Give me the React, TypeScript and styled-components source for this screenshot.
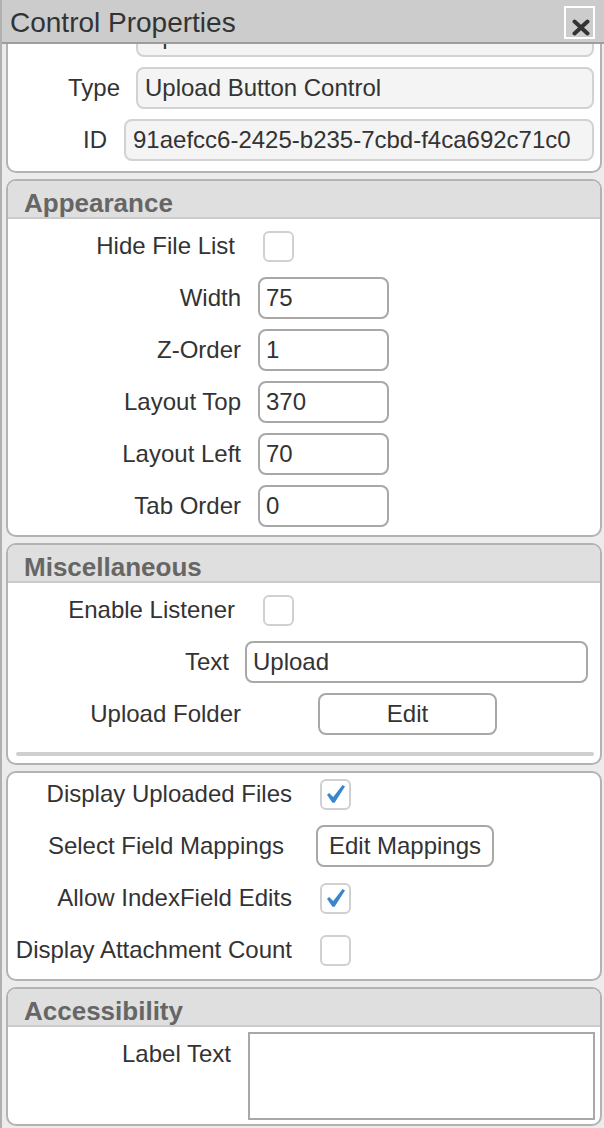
import { useLayoutEffect, useRef } from "react";
import styled, { createGlobalStyle } from "styled-components";

const GlobalStyle = createGlobalStyle`
  html, body {
    margin: 0;
    padding: 0;
  }
  body {
    font-family: "Liberation Sans", Arial, Helvetica, sans-serif;
    color: #333;
    background: #ececec;
    overflow: hidden;
  }
  * {
    box-sizing: border-box;
  }
`;

type RowSpec = {
  label: string;
  labelWidth: number;
  gap: number;
  kind: "text" | "readonly" | "check" | "button" | "area";
  value?: string;
  width?: number;
  right?: number;
  checked?: boolean;
};

const general: RowSpec[] = [
  { label: "Name", labelWidth: 112, gap: 16, kind: "readonly", value: "Upload1", right: 6 },
  { label: "Type", labelWidth: 112, gap: 16, kind: "readonly", value: "Upload Button Control", right: 6 },
  { label: "ID", labelWidth: 99, gap: 17, kind: "readonly", value: "91aefcc6-2425-b235-7cbd-f4ca692c71c0", right: 6 },
];

const appearance: RowSpec[] = [
  { label: "Hide File List", labelWidth: 227, gap: 28, kind: "check" },
  { label: "Width", labelWidth: 233, gap: 17, kind: "text", value: "75", width: 131 },
  { label: "Z-Order", labelWidth: 233, gap: 17, kind: "text", value: "1", width: 131 },
  { label: "Layout Top", labelWidth: 233, gap: 17, kind: "text", value: "370", width: 131 },
  { label: "Layout Left", labelWidth: 233, gap: 17, kind: "text", value: "70", width: 131 },
  { label: "Tab Order", labelWidth: 233, gap: 17, kind: "text", value: "0", width: 131 },
];

const misc: RowSpec[] = [
  { label: "Enable Listener", labelWidth: 227, gap: 28, kind: "check" },
  { label: "Text", labelWidth: 221, gap: 16, kind: "text", value: "Upload", right: 12 },
  { label: "Upload Folder", labelWidth: 233, gap: 77, kind: "button", value: "Edit", width: 179 },
];

const uploads: RowSpec[] = [
  { label: "Display Uploaded Files", labelWidth: 284, gap: 28, kind: "check", checked: true },
  { label: "Select Field Mappings", labelWidth: 276, gap: 32, kind: "button", value: "Edit Mappings", width: 178 },
  { label: "Allow IndexField Edits", labelWidth: 284, gap: 28, kind: "check", checked: true },
  { label: "Display Attachment Count", labelWidth: 284, gap: 28, kind: "check" },
];

const accessibility: RowSpec[] = [
  { label: "Label Text", labelWidth: 223, gap: 17, kind: "area", right: 5 },
];

function CheckMark() {
  return (
    <svg width="18" height="18" viewBox="0 0 18 18" aria-hidden="true">
      <path d="M0 9.8 L2.2 8 L6.2 12 L15.6 0 L18 1.6 L7.6 17.8 L5.4 17.8 Z" fill="#3a85cc" />
    </svg>
  );
}

function CloseIcon() {
  return (
    <svg width="18" height="17" viewBox="0 0 18 17" aria-hidden="true">
      <path d="M2.5 2.5 L15.5 14.5 M15.5 2.5 L2.5 14.5" stroke="#333" strokeWidth="4" strokeLinecap="round" />
    </svg>
  );
}

function PropRow({ spec }: { spec: RowSpec }) {
  const top = spec.kind === "area";
  return (
    <Row $top={top}>
      <Label $width={spec.labelWidth} $gap={spec.gap} $top={top}>
        {spec.label}
      </Label>
      {(spec.kind === "text" || spec.kind === "readonly") && (
        <Input
          readOnly
          value={spec.value}
          $readonly={spec.kind === "readonly"}
          $width={spec.width}
          $right={spec.right}
        />
      )}
      {spec.kind === "check" && (
        <CheckBox role="checkbox" aria-checked={!!spec.checked}>
          {spec.checked && <CheckMark />}
        </CheckBox>
      )}
      {spec.kind === "button" && <Button $width={spec.width ?? 0}>{spec.value}</Button>}
      {spec.kind === "area" && <TextArea $right={spec.right} />}
    </Row>
  );
}

type Pad = "plain" | "headed" | "tight" | "first";

const pads: Record<Pad, string> = {
  first: "0 0 10px",
  plain: "0 0 8px",
  headed: "6px 0 8px",
  tight: "5px 0 4px",
};

function Section({ title, rows, divider, pad }: { title?: string; rows: RowSpec[]; divider?: boolean; pad: Pad }) {
  return (
    <Panel>
      {title && <PanelHeader>{title}</PanelHeader>}
      <Rows $pad={pad}>
        {rows.map((r) => (
          <PropRow key={r.label} spec={r} />
        ))}
      </Rows>
      {divider && <Divider />}
    </Panel>
  );
}

export default function App() {
  const bodyRef = useRef<HTMLDivElement>(null);

  // the property list is scrolled a little, as in the reference
  useLayoutEffect(() => {
    if (bodyRef.current) bodyRef.current.scrollTop = 37;
  }, []);

  return (
    <>
      <GlobalStyle />
      <Window>
        <TitleBar>
          <Title>Control Properties</Title>
          <CloseButton aria-label="Close">
            <CloseIcon />
          </CloseButton>
        </TitleBar>
        <Body ref={bodyRef}>
          <Stack>
            <Section rows={general} pad="first" />
            <Section title="Appearance" rows={appearance} pad="headed" />
            <Section title="Miscellaneous" rows={misc} pad="headed" divider />
            <Section rows={uploads} pad="plain" />
            <Section title="Accessibility" rows={accessibility} pad="tight" />
          </Stack>
        </Body>
      </Window>
    </>
  );
}

const Window = styled.div`
  width: 604px;
  height: 1128px;
  display: flex;
  flex-direction: column;
  background: #ececec;
  border-left: 2px solid #b0b0b0;
`;

const TitleBar = styled.div`
  flex: none;
  height: 44px;
  display: flex;
  align-items: flex-start;
  justify-content: space-between;
  padding: 0 9px 0 8px;
  background: #cccccc;
  border-bottom: 2px solid #9d9d9d;
`;

const Title = styled.h1`
  margin: 0;
  font-size: 28px;
  font-weight: normal;
  line-height: 45px;
  color: #333;
`;

const CloseButton = styled.button`
  width: 31px;
  height: 33px;
  margin-top: 6px;
  padding: 0 0 1px 3px;
  display: flex;
  align-items: flex-end;
  justify-content: center;
  background: transparent;
  border: 2px solid #fff;
  border-radius: 0;
`;

const Body = styled.div`
  flex: 1;
  overflow: hidden;
  padding: 6px 2px 0 4px;
`;

const Stack = styled.div`
  display: flex;
  flex-direction: column;
  gap: 6px;
  padding-bottom: 8px;
`;

const Panel = styled.section`
  background: #fff;
  border: 2px solid #b3b3b3;
  border-radius: 10px;
  overflow: hidden;
`;

const PanelHeader = styled.h2`
  margin: 0;
  height: 38px;
  padding: 8px 0 0 16px;
  font-size: 26px;
  font-weight: bold;
  line-height: 28px;
  color: #666;
  background: #dfdfdf;
  border-bottom: 2px solid #cbcbcb;
`;

const Rows = styled.div<{ $pad: Pad }>`
  display: flex;
  flex-direction: column;
  gap: 10px;
  padding: ${(p) => pads[p.$pad]};
`;

const Row = styled.div<{ $top: boolean }>`
  display: flex;
  align-items: ${(p) => (p.$top ? "flex-start" : "center")};
  min-height: 42px;
`;

const Label = styled.label<{ $width: number; $gap: number; $top: boolean }>`
  flex: none;
  width: ${(p) => p.$width}px;
  margin-right: ${(p) => p.$gap}px;
  padding-top: ${(p) => (p.$top ? "8px" : "0")};
  text-align: right;
  white-space: nowrap;
  font-size: 24px;
  color: #333;
`;

const Input = styled.input<{ $readonly: boolean; $width?: number; $right?: number }>`
  ${(p) => (p.$width ? `flex: none; width: ${p.$width}px;` : "flex: 1; min-width: 0;")}
  margin-right: ${(p) => p.$right ?? 0}px;
  height: 42px;
  padding: 0 ${(p) => (p.$readonly ? 7 : 6)}px;
  font-family: inherit;
  font-size: 24px;
  color: #333;
  background: ${(p) => (p.$readonly ? "#f4f4f4" : "#fff")};
  border: 2px solid ${(p) => (p.$readonly ? "#d2d2d2" : "#a8a8a8")};
  border-radius: 8px;
  outline: none;
`;

const CheckBox = styled.span`
  flex: none;
  width: 31px;
  height: 31px;
  display: flex;
  align-items: center;
  justify-content: center;
  background: #fff;
  border: 2px solid #d0d0d0;
  border-radius: 6px;
`;

const Button = styled.button<{ $width: number }>`
  flex: none;
  width: ${(p) => p.$width}px;
  height: 42px;
  padding: 0;
  font-family: inherit;
  font-size: 24px;
  color: #333;
  background: #fff;
  border: 2px solid #a8a8a8;
  border-radius: 8px;
`;

const TextArea = styled.textarea<{ $right?: number }>`
  flex: 1;
  min-width: 0;
  height: 88px;
  margin: 0 ${(p) => p.$right ?? 0}px 0 0;
  resize: none;
  background: #fff;
  border: 2px solid #a8a8a8;
  border-radius: 0;
  outline: none;
`;

const Divider = styled.div`
  height: 4px;
  margin: 9px 6px 7px 8px;
  background: #cfcfcf;
  border-radius: 2px;
`;
